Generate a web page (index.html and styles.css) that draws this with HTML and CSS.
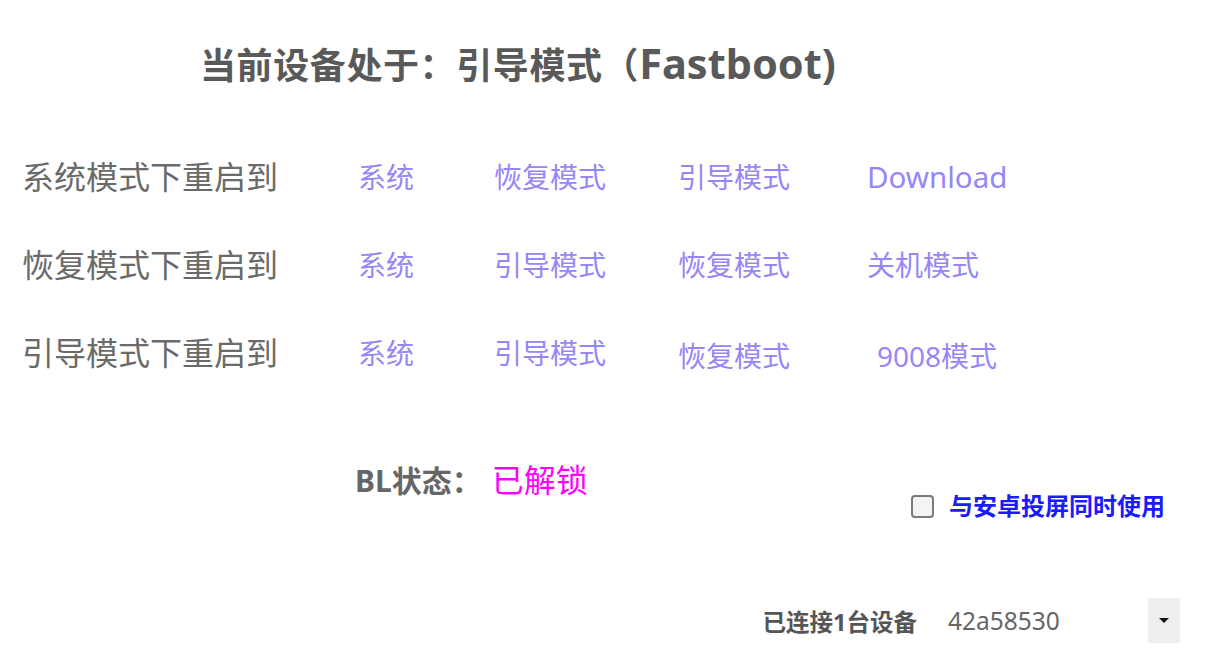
FILE: index.html
```html
<!DOCTYPE html>
<html lang="zh-CN">
<head>
<meta charset="utf-8">
<title>设备模式</title>
<link rel="stylesheet" href="styles.css">
</head>
<body>
<div class="page">
  <h1 class="title">当前设备处于：引导模式（<span class="latin">Fastboot)</span></h1>

  <div class="reboot-grid">
    <div class="row">
      <span class="label">系统模式下重启到</span>
      <a class="link">系统</a>
      <a class="link">恢复模式</a>
      <a class="link">引导模式</a>
      <a class="link link-latin">Download</a>
    </div>
    <div class="row">
      <span class="label">恢复模式下重启到</span>
      <a class="link">系统</a>
      <a class="link">引导模式</a>
      <a class="link">恢复模式</a>
      <a class="link">关机模式</a>
    </div>
    <div class="row">
      <span class="label">引导模式下重启到</span>
      <a class="link">系统</a>
      <a class="link">引导模式</a>
      <a class="link link-low">恢复模式</a>
      <a class="link link-shift">9008模式</a>
    </div>
  </div>

  <div class="status-area">
    <div class="bl-state">
      <span class="bl-label">BL状态：</span><span class="bl-value">已解锁</span>
    </div>
    <label class="mirror">
      <span class="checkbox"></span>
      <span class="mirror-text">与安卓投屏同时使用</span>
    </label>
  </div>

  <div class="device-bar">
    <span class="device-label">已连接1台设备</span>
    <div class="device-select">
      <span class="device-value">42a58530</span>
      <span class="device-arrow"><span class="tri"></span></span>
    </div>
  </div>
</div>
</body>
</html>
```

FILE: styles.css
```css
html, body {
  margin: 0;
  padding: 0;
  background: #ffffff;
}

body {
  font-family: "Noto Sans", "Noto Sans CJK SC", sans-serif;
  color: #666666;
}

.page {
  width: 1213px;
  height: 666px;
  overflow: hidden;
}

.title {
  margin: 42px 0 0 0;
  padding-left: 200px;
  font-size: 36px;
  line-height: 43px;
  font-weight: 700;
  color: #595959;
  letter-spacing: 0.6px;
  white-space: nowrap;
}

.title .latin {
  font-size: 41.5px;
  letter-spacing: 0;
}

.reboot-grid {
  margin-top: 46px;
  padding-left: 22px;
}

.row {
  display: grid;
  grid-template-columns: 336px 136px 184px 189px auto;
  height: 88px;
  align-items: center;
  line-height: 40px;
}

.label {
  font-size: 32px;
  color: #6a6a6a;
  white-space: nowrap;
}

.link {
  font-size: 28px;
  color: #9587f7;
  white-space: nowrap;
  cursor: pointer;
}

.link-latin {
  font-size: 29.5px;
}

.link-low {
  padding-top: 6px;
}

.link-shift {
  padding-left: 10px;
  padding-top: 6px;
}

.status-area {
  margin-top: 63px;
  display: flex;
  justify-content: space-between;
  align-items: flex-start;
  padding-left: 355px;
  padding-right: 48px;
}

.bl-state {
  line-height: 40px;
  white-space: nowrap;
}

.bl-label {
  font-size: 30px;
  font-weight: 700;
  color: #666666;
}

.bl-value {
  font-size: 32px;
  color: #ff00ff;
  margin-left: 10px;
}

.mirror {
  margin-top: 26px;
  display: flex;
  align-items: center;
  line-height: 40px;
}

.checkbox {
  width: 19px;
  height: 19px;
  border: 2px solid #7a7a7a;
  border-radius: 4px;
  background: #f4f4f4;
  margin-right: 15px;
}

.mirror-text {
  font-size: 24px;
  font-weight: 700;
  color: #1a1aff;
  white-space: nowrap;
}

.device-bar {
  margin-top: 72px;
  display: flex;
  justify-content: flex-end;
  align-items: center;
  padding-right: 33px;
}

.device-label {
  font-size: 23.5px;
  font-weight: 700;
  color: #555555;
  margin-right: 23px;
  white-space: nowrap;
}

.device-select {
  width: 240px;
  height: 45px;
  display: flex;
  align-items: stretch;
}

.device-value {
  flex: 1;
  display: flex;
  align-items: center;
  padding-left: 8px;
  font-size: 24.5px;
  color: #666666;
}

.device-arrow {
  width: 32px;
  background: #efefef;
  display: flex;
  align-items: center;
  justify-content: center;
}

.tri {
  width: 0;
  height: 0;
  border-left: 5px solid transparent;
  border-right: 5px solid transparent;
  border-top: 5px solid #111111;
}
```
